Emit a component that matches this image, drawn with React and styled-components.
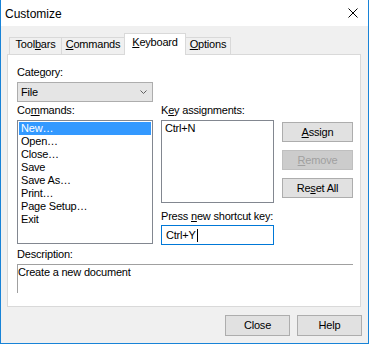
import React from "react";
import styled, { createGlobalStyle } from "styled-components";

const GlobalStyle = createGlobalStyle`
  html, body {
    margin: 0;
    padding: 0;
    background: #ffffff;
  }
  body {
    font-family: "Liberation Sans", Arial, sans-serif;
    font-size: 11px;
    letter-spacing: -0.2px;
    color: #000000;
  }
  * {
    box-sizing: border-box;
  }
`;

const commands = ["New…", "Open…", "Close…", "Save", "Save As…", "Print…", "Page Setup…", "Exit"];

const App = () => {
  return (
    <>
      <GlobalStyle />
      <Window>
        <TitleBar>
          <Title>Customize</Title>
          <CloseGlyph width="10" height="10" viewBox="0 0 10 10">
            <path d="M0.5 0.5 L9.5 9.5 M9.5 0.5 L0.5 9.5" stroke="#000" strokeWidth="1" />
          </CloseGlyph>
        </TitleBar>

        <Body>
          <TabStrip>
            <Tab $width={53}>
              Tool<u>b</u>ars
            </Tab>
            <Tab $width={64}>
              <u>C</u>ommands
            </Tab>
            <Tab $width={62} $active>
              <u>K</u>eyboard
            </Tab>
            <Tab $width={46}>
              <u>O</u>ptions
            </Tab>
          </TabStrip>

          <Panel>
            <Label>
              Cate<u>g</u>ory:
            </Label>
            <Combo>
              <span>File</span>
              <svg width="7" height="4" viewBox="0 0 7 4">
                <path d="M0.5 0.5 L3.5 3.5 L6.5 0.5" stroke="#606060" strokeWidth="1" fill="none" />
              </svg>
            </Combo>

            <Columns>
              <Column $width={136}>
                <Label>
                  Co<u>m</u>mands:
                </Label>
                <ListBox $height={124}>
                  {commands.map((c, i) => (
                    <ListItem key={c} $selected={i === 0}>
                      {c}
                    </ListItem>
                  ))}
                </ListBox>
              </Column>

              <Column $width={113}>
                <Label>
                  K<u>e</u>y assignments:
                </Label>
                <ListBox $height={83}>
                  <KeyItem>Ctrl+N</KeyItem>
                </ListBox>
                <Label $top={7}>
                  Press <u>n</u>ew shortcut key:
                </Label>
                <ShortcutInput>
                  Ctrl+Y
                  <Caret />
                </ShortcutInput>
              </Column>

              <ButtonColumn>
                <SideButton>
                  <u>A</u>ssign
                </SideButton>
                <SideButton disabled>
                  <u>R</u>emove
                </SideButton>
                <SideButton>
                  Re<u>s</u>et All
                </SideButton>
              </ButtonColumn>
            </Columns>

            <Label $top={3}>Description:</Label>
            <DescriptionBox>Create a new document</DescriptionBox>
          </Panel>

          <Footer>
            <DialogButton>Close</DialogButton>
            <DialogButton>Help</DialogButton>
          </Footer>
        </Body>
      </Window>
    </>
  );
};

const Window = styled.div`
  width: 369px;
  height: 344px;
  background: #f0f0f0;
  border: 1px solid #1883d7;
  border-top: none;
  display: flex;
  flex-direction: column;
`;

const TitleBar = styled.div`
  height: 26px;
  background: #ffffff;
  display: flex;
  align-items: center;
  justify-content: space-between;
  padding: 0 10px 0 4px;
`;

const Title = styled.div`
  font-size: 12px;
  line-height: 16px;
  letter-spacing: 0;
  padding-top: 1px;
`;

const CloseGlyph = styled.svg`
  display: block;
`;

const Body = styled.div`
  padding-left: 6px;
`;

const TabStrip = styled.div`
  display: flex;
  align-items: flex-end;
  height: 22px;
  margin-top: 7px;
  margin-bottom: -1px;
  padding-left: 2px;
  position: relative;
  z-index: 1;
`;

const Tab = styled.div`
  width: ${p => p.$width}px;
  height: ${p => (p.$active ? 22 : 18)}px;
  margin-left: -1px;
  border: 1px solid #d9d9d9;
  border-bottom: ${p => (p.$active ? "none" : "1px solid #d9d9d9")};
  background: ${p => (p.$active ? "#ffffff" : "#f0f0f0")};
  text-align: center;
  line-height: 13px;
  padding-top: ${p => (p.$active ? 2 : 0)}px;
  position: relative;
  z-index: ${p => (p.$active ? 2 : 1)};
  white-space: nowrap;

  &:first-child {
    margin-left: 0;
  }
`;

const Panel = styled.div`
  width: 354px;
  height: 253px;
  background: #ffffff;
  border: 1px solid #d9d9d9;
  padding: 11px 0 0 9px;
  display: flex;
  flex-direction: column;
`;

const Label = styled.div`
  line-height: 13px;
  height: 13px;
  margin-top: ${p => p.$top || 0}px;
  white-space: nowrap;
`;

const Combo = styled.div`
  width: 136px;
  height: 20px;
  margin-top: 3px;
  background: #e5e5e5;
  border: 1px solid #adadad;
  display: flex;
  align-items: center;
  justify-content: space-between;
  padding: 0 5px 0 3px;
  line-height: 13px;

  svg {
    display: block;
  }
`;

const Columns = styled.div`
  display: flex;
  gap: 8px;
  margin-top: 2px;
`;

const Column = styled.div`
  width: ${p => p.$width}px;
  display: flex;
  flex-direction: column;
`;

const ListBox = styled.div`
  height: ${p => p.$height}px;
  margin-top: 3px;
  border: 1px solid #828790;
  background: #ffffff;
  padding: 1px;
`;

const ListItem = styled.div`
  height: 13px;
  line-height: 13px;
  padding-left: 2px;
  background: ${p => (p.$selected ? "#3399ff" : "transparent")};
  color: ${p => (p.$selected ? "#ffffff" : "#000000")};
  white-space: nowrap;
`;

const KeyItem = styled.div`
  line-height: 13px;
  padding-left: 2px;
`;

const ShortcutInput = styled.div`
  height: 20px;
  margin-top: 2px;
  border: 1px solid #0078d7;
  display: flex;
  align-items: center;
  padding-left: 4px;
  line-height: 13px;
`;

const Caret = styled.span`
  display: inline-block;
  width: 1px;
  height: 13px;
  background: #000000;
  margin-left: 1px;
`;

const ButtonColumn = styled.div`
  display: flex;
  flex-direction: column;
  gap: 8px;
  padding-top: 18px;
`;

const Button = styled.button`
  font-family: "Liberation Sans", Arial, sans-serif;
  font-size: 11px;
  letter-spacing: -0.2px;
  line-height: 13px;
  padding: 0;
  color: #000000;
  background: #e1e1e1;
  border: 1px solid #adadad;
  border-radius: 0;

  &:disabled {
    color: #a0a0a0;
    background: #cccccc;
    border-color: #bfbfbf;
  }
`;

const SideButton = styled(Button)`
  width: 71px;
  height: 20px;
`;

const DialogButton = styled(Button)`
  width: 65px;
  height: 21px;
`;

const DescriptionBox = styled.div`
  width: 336px;
  height: 29px;
  margin-top: 3px;
  border-top: 1px solid #a0a0a0;
  border-left: 1px solid #a0a0a0;
  padding: 1px 0 0 0;
  line-height: 13px;
`;

const Footer = styled.div`
  display: flex;
  justify-content: flex-end;
  gap: 7px;
  padding: 8px 6px 0 0;
`;

export default App;
